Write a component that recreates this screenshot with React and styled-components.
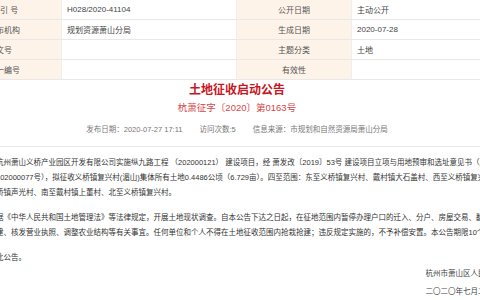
import React from "react";
import styled, { createGlobalStyle } from "styled-components";

const GlobalStyle = createGlobalStyle`
  html, body {
    margin: 0;
    padding: 0;
    background: #fff;
    overflow: hidden;
  }
  body {
    font-family: "Liberation Sans", "Noto Sans CJK SC", sans-serif;
    color: #333;
  }
`;

const Page = styled.div`
  width: 580px;
  margin-left: -53px;
`;

const InfoTable = styled.div`
  display: grid;
  grid-template-columns: 115px 175px 115px 175px;
`;

const Cell = styled.div`
  height: 19px;
  border-bottom: 1px solid #e8e8e8;
  border-right: 1px solid #eeeeee;
  display: flex;
  align-items: center;
  box-sizing: content-box;
  font-size: 8px;
  white-space: nowrap;
  justify-content: ${(p) => (p.$label ? "center" : "flex-start")};
  padding-left: ${(p) => (p.$label ? "0" : "5px")};
  background: ${(p) => (p.$label ? "#fdf3e8" : "#fff")};
  color: ${(p) => (p.$label ? "#555" : "#444")};
`;

const Article = styled.div`
  padding: 0 26.5px;
`;

const Title = styled.h1`
  margin: 2px 0 0;
  text-align: center;
  font-size: 12px;
  line-height: 16px;
  font-weight: bold;
  color: #c8161e;
`;

const DocNo = styled.div`
  margin-top: 3px;
  text-align: center;
  font-size: 9.5px;
  line-height: 14px;
  color: #d64546;
`;

const Meta = styled.div`
  display: flex;
  justify-content: center;
  gap: 17px;
  margin: 9px -26.5px 0;
  padding-bottom: 10px;
  border-bottom: 1px solid #e8e8e8;
  font-size: 7.5px;
  line-height: 12px;
  color: #777;
  white-space: nowrap;
`;

const Body = styled.div`
  margin-top: 8px;
  font-size: 7.5px;
  line-height: 15px;
  color: #333;
`;

const Para = styled.p`
  margin: 0 0 10px;

  &:last-child {
    margin-bottom: 0;
  }
`;

const Line = styled.span`
  display: block;
  white-space: nowrap;
  text-indent: ${(p) => (p.$first ? "2em" : "0")};
`;

const Sign = styled.div`
  display: flex;
  justify-content: flex-end;
  margin-right: -7px;
`;

const SignBlock = styled.div`
  width: 82px;
  font-size: 7.5px;
  line-height: 18px;
  color: #444;
  white-space: nowrap;
`;

const rows = [
  ["索 引 号", "H028/2020-41104", "公开日期", "主动公开"],
  ["发布机构", "规划资源萧山分局", "生成日期", "2020-07-28"],
  ["文号", "", "主题分类", "土地"],
  ["统一编号", "", "有效性", ""],
];

export default function App() {
  return (
    <>
      <GlobalStyle />
      <Page>
        <InfoTable>
          {rows.map((r, i) => (
            <React.Fragment key={i}>
              <Cell $label>{r[0]}</Cell>
              <Cell>{r[1]}</Cell>
              <Cell $label>{r[2]}</Cell>
              <Cell>{r[3]}</Cell>
            </React.Fragment>
          ))}
        </InfoTable>
        <Article>
          <Title>土地征收启动公告</Title>
          <DocNo>杭萧征字〔2020〕第0163号</DocNo>
          <Meta>
            <span>发布日期：2020-07-27 17:11</span>
            <span>访问次数:5</span>
            <span>信息来源：市规划和自然资源局萧山分局</span>
          </Meta>
          <Body>
            <Para>
              <Line $first>
                因杭州萧山义桥产业园区开发有限公司实施纵九路工程 （202000121） 建设项目，经 萧发改〔2019〕53号 建设项目立项与用地预审和选址意见书（用字第
              </Line>
              <Line>
                选字第202000077号），拟征收义桥镇复兴村(湄山)集体所有土地0.4486公顷（6.729亩）。四至范围：东至义桥镇复兴村、戴村镇大石盖村、西至义桥镇复兴村、义
              </Line>
              <Line>村、义桥镇声光村、南至戴村镇上董村、北至义桥镇复兴村。</Line>
            </Para>
            <Para>
              <Line $first>
                根据《中华人民共和国土地管理法》等法律规定，开展土地现状调查。自本公告下达之日起，在征地范围内暂停办理户口的迁入、分户、房屋交易、翻（扩）建、新
              </Line>
              <Line>
                扩、改建、核发营业执照、调整农业结构等有关事宜。任何单位和个人不得在土地征收范围内抢栽抢建；违反规定实施的，不予补偿安置。本公告期限10个工作日。
              </Line>
            </Para>
            <Para>
              <Line $first>特此公告。</Line>
            </Para>
          </Body>
          <Sign>
            <SignBlock>
              杭州市萧山区人民政府
              <br />
              二〇二〇年七月二十八日
            </SignBlock>
          </Sign>
        </Article>
      </Page>
    </>
  );
}
